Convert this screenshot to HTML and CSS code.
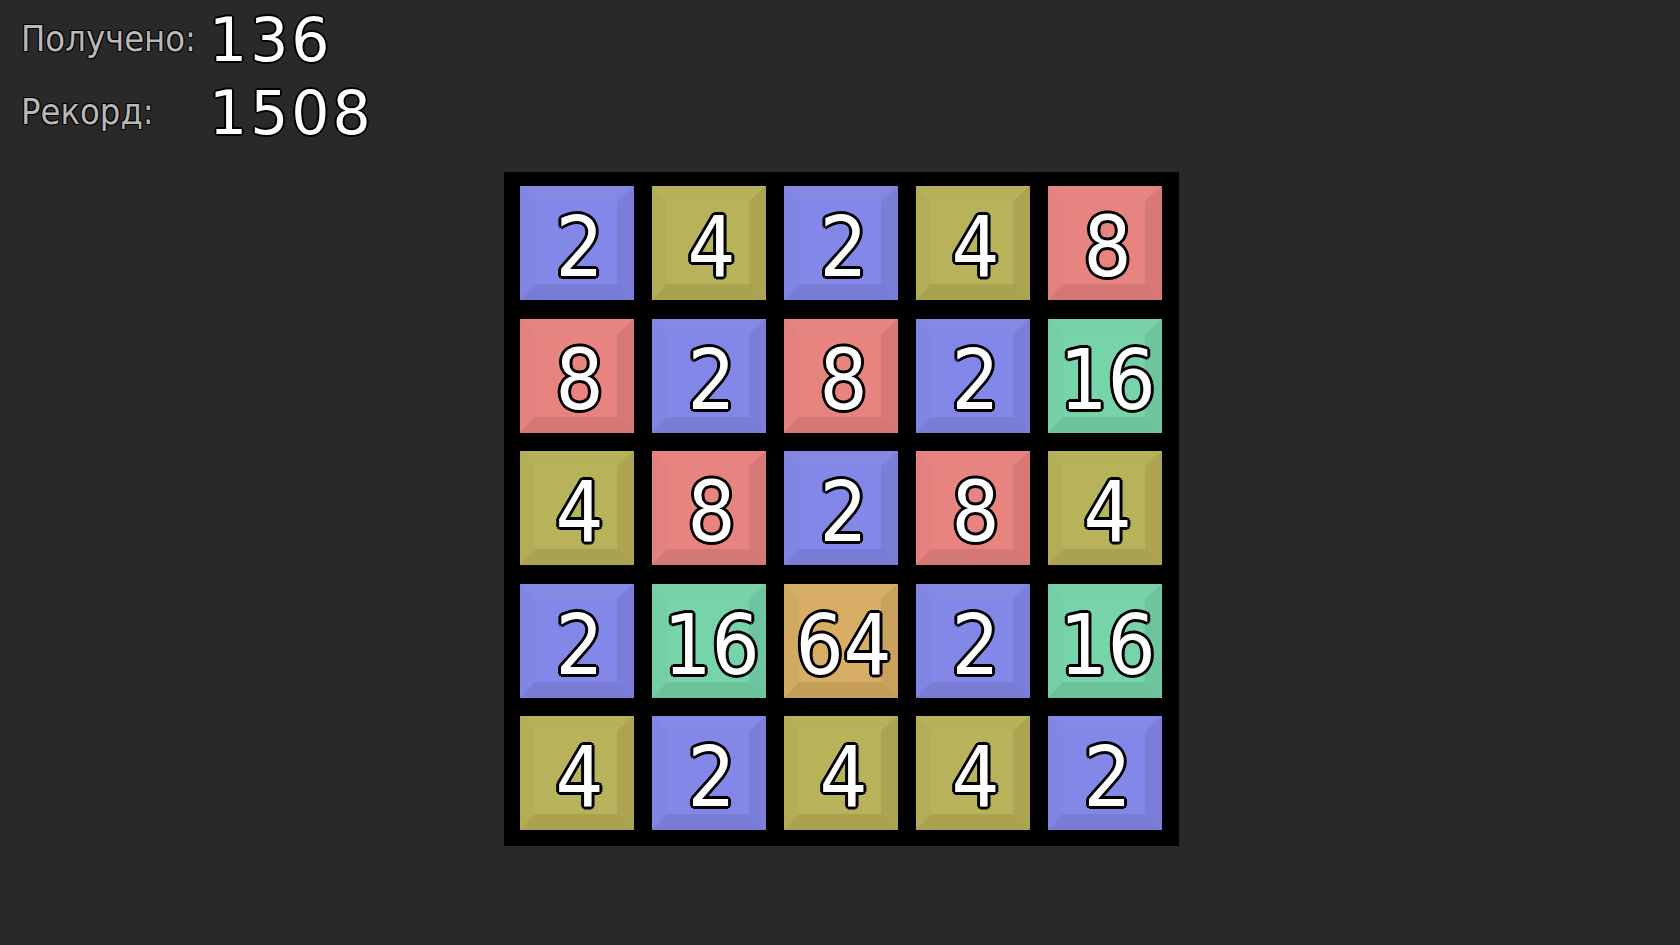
FILE: index.html
```html
<!DOCTYPE html>
<html lang="ru">
<head>
    <meta charset="UTF-8">
    <title>2048</title>
    <link rel="stylesheet" href="styles.css">
</head>
<body>
    <div class="scores">
        <div class="score-label">Получено:</div>
        <div class="score-value">136</div>
        <div class="score-label">Рекорд:</div>
        <div class="score-value">1508</div>
    </div>

    <div class="field">
        <div class="board">
            <div class="tile t2">2</div>
            <div class="tile t4">4</div>
            <div class="tile t2">2</div>
            <div class="tile t4">4</div>
            <div class="tile t8">8</div>

            <div class="tile t8">8</div>
            <div class="tile t2">2</div>
            <div class="tile t8">8</div>
            <div class="tile t2">2</div>
            <div class="tile t16">16</div>

            <div class="tile t4">4</div>
            <div class="tile t8">8</div>
            <div class="tile t2">2</div>
            <div class="tile t8">8</div>
            <div class="tile t4">4</div>

            <div class="tile t2">2</div>
            <div class="tile t16">16</div>
            <div class="tile t64">64</div>
            <div class="tile t2">2</div>
            <div class="tile t16">16</div>

            <div class="tile t4">4</div>
            <div class="tile t2">2</div>
            <div class="tile t4">4</div>
            <div class="tile t4">4</div>
            <div class="tile t2">2</div>
        </div>
    </div>
</body>
</html>
```

FILE: styles.css
```css
body {
    margin: 0;
    background-color: #292929;
    font-family: "DejaVu Sans", sans-serif;
}
.scores {
    display: grid;
    grid-template-columns: 188px auto;
    grid-auto-rows: 73px;
    align-items: center;
    padding: 3px 0 0 21px;
    height: 167px;
    box-sizing: border-box;
}
.score-label {
    font-family: "DejaVu Sans Condensed", "DejaVu Sans", sans-serif;
    font-stretch: condensed;
    font-size: 36px;
    color: #b8b8b8;
    text-shadow: 1px 1px 0 #000, -1px -1px 0 #000, 1px -1px 0 #000, -1px 1px 0 #000;
    padding-bottom: 3px;
}
.score-value {
    font-size: 60px;
    letter-spacing: 3px;
    color: #fff;
    text-shadow: 2px 0 0 #000, -2px 0 0 #000, 0 2px 0 #000, 0 -2px 0 #000,
        1px 1px 0 #000, -1px -1px 0 #000, 1px -1px 0 #000, -1px 1px 0 #000;
}
.field {
    display: flex;
    justify-content: center;
    padding-left: 3px;
}
.board {
    display: grid;
    grid-template-columns: repeat(5, 114px);
    grid-auto-rows: 114px;
    column-gap: 18px;
    row-gap: 18.5px;
    padding: 14px 17px 16px 16px;
    background-color: #000;
    margin-top: 5px;
}
.tile {
    display: flex;
    align-items: center;
    justify-content: center;
    box-sizing: border-box;
    border-style: solid;
    border-width: 15px 17px 16px 15px;
    padding: 9px 0 0 7px;
    font-family: "DejaVu Sans Condensed", "DejaVu Sans", sans-serif;
    font-stretch: condensed;
    font-size: 84px;
    line-height: 1;
    color: #fff;
    text-shadow: 3px 0 0 #000, -3px 0 0 #000, 0 3px 0 #000, 0 -3px 0 #000,
        2px 2px 0 #000, -2px -2px 0 #000, 2px -2px 0 #000, -2px 2px 0 #000;
}
.t2 {
    background-color: #8387e8;
    border-color: #8689e3 #7b7ed8 #797cd5 #8285e2;
}
.t4 {
    background-color: #b8b25b;
    border-color: #b7b15a #aaa453 #a8a251 #b3ad58;
}
.t8 {
    background-color: #e88480;
    border-color: #e58581 #d77a77 #d47875 #e2817d;
}
.t16 {
    background-color: #77d3aa;
    border-color: #79d1a9 #6dc49e #6bc29b #74cea6;
}
.t64 {
    background-color: #d7ae63;
    border-color: #d5ad64 #c8a15c #c59f5a #d1a960;
}
```
